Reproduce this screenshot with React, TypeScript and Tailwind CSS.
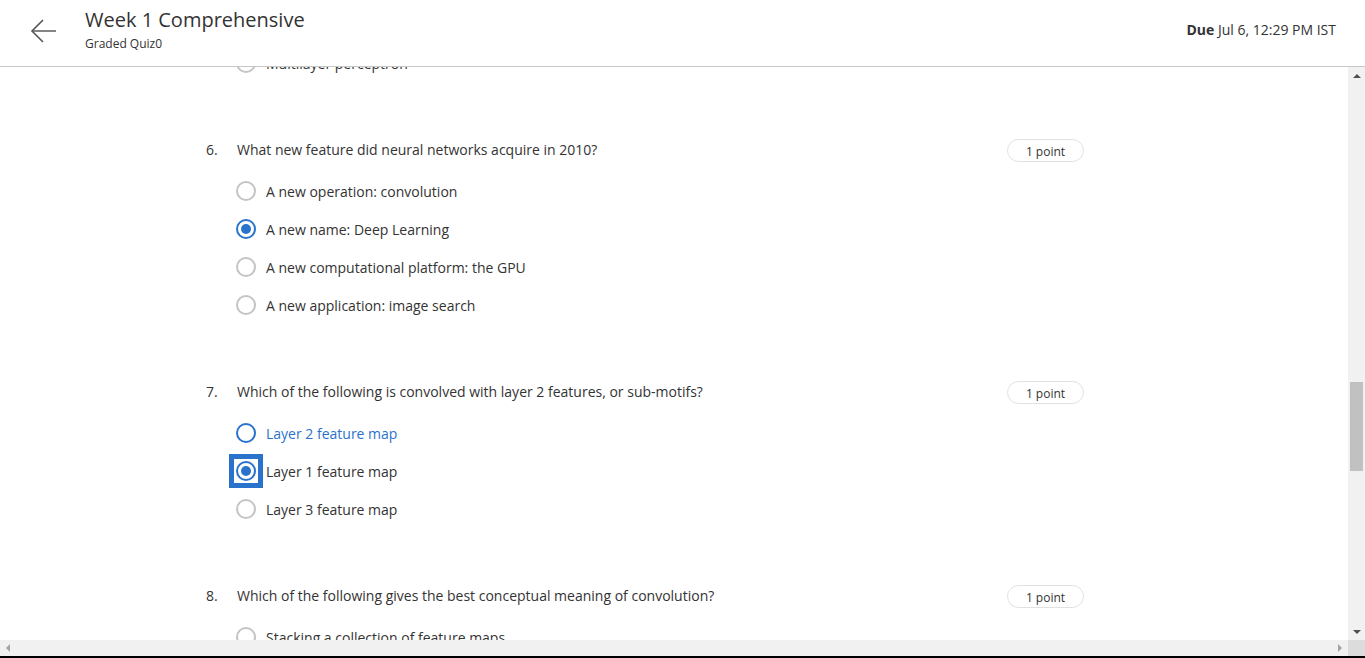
import React from "react";

type Option = { label: string; state?: "checked" | "hover" | "focus" };

interface Question {
  num: number;
  text: string;
  options: Option[];
}

const questions: Question[] = [
  {
    num: 6,
    text: "What new feature did neural networks acquire in 2010?",
    options: [
      { label: "A new operation: convolution" },
      { label: "A new name: Deep Learning", state: "checked" },
      { label: "A new computational platform: the GPU" },
      { label: "A new application: image search" },
    ],
  },
  {
    num: 7,
    text: "Which of the following is convolved with layer 2 features, or sub-motifs?",
    options: [
      { label: "Layer 2 feature map", state: "hover" },
      { label: "Layer 1 feature map", state: "focus" },
      { label: "Layer 3 feature map" },
    ],
  },
  {
    num: 8,
    text: "Which of the following gives the best conceptual meaning of convolution?",
    options: [{ label: "Stacking a collection of feature maps" }],
  },
];

function Radio({ state }: { state?: Option["state"] }) {
  const checked = state === "checked" || state === "focus";
  const blue = state !== undefined;
  const circle = (
    <span
      className={`flex h-5 w-5 items-center justify-center rounded-full border-2 bg-white ${
        blue ? "border-[#2a73cc]" : "border-[#c4c4c4]"
      }`}
    >
      {checked && <span className="h-[10px] w-[10px] rounded-full bg-[#2a73cc]" />}
    </span>
  );
  if (state === "focus") {
    return (
      <span className="-m-[7px] flex h-[34px] w-[34px] items-center justify-center border-[5px] border-[#2a73cc] bg-white">
        {circle}
      </span>
    );
  }
  return circle;
}

function OptionRow({ option }: { option: Option }) {
  return (
    <div className="flex h-[38px] items-center gap-[10px]">
      <Radio state={option.state} />
      <span
        className={`text-[14px] ${
          option.state === "hover" ? "text-[#2a73cc]" : "text-[#333]"
        }`}
      >
        {option.label}
      </span>
    </div>
  );
}

function QuestionBlock({ q }: { q: Question }) {
  return (
    <div className="mt-[55px]">
      <div className="flex h-6 items-start">
        <span className="mt-[1px] w-[31px] text-[14px] leading-6 text-[#333]">{q.num}.</span>
        <span className="mt-[1px] flex-1 text-[14px] leading-6 text-[#333]">{q.text}</span>
        <span className="mt-[2px] flex h-[23px] w-[77px] items-center justify-center rounded-full border border-[#e1e1e1] pt-[3px] text-[12px] leading-4 text-[#333]">
          1 point
        </span>
      </div>
      <div className="mt-[11px] pl-[30px]">
        {q.options.map((o) => (
          <OptionRow key={o.label} option={o} />
        ))}
      </div>
    </div>
  );
}

export default function App() {
  return (
    <div
      className="relative h-[658px] w-[1365px] overflow-hidden bg-white"
      style={{ fontFamily: '"Open Sans", "Liberation Sans", sans-serif' }}
    >
      <header className="flex h-[67px] items-start border-b border-[#c8c8c8] bg-white">
        <div className="flex h-[62px] w-[85px] items-center pl-[29px]">
          <svg width="28" height="26" viewBox="0 0 28 26" fill="none">
            <path d="M3 13 H27" stroke="#666" strokeWidth="1.6" />
            <path d="M14 2 L3 13 L14 24" stroke="#555" strokeWidth="1.6" />
          </svg>
        </div>
        <div className="flex flex-col pt-[7px]">
          <span className="text-[20px] leading-[26px] text-[#333]">Week 1 Comprehensive</span>
          <span className="mt-[3px] text-[12px] leading-[16px] text-[#333]">Graded Quiz0</span>
        </div>
        <div className="ml-auto pr-[29px] pt-[20px] text-[14px] leading-5 text-[#333]">
          <span className="font-bold">Due</span> Jul 6, 12:29 PM IST
        </div>
      </header>

      <div className="flex h-[573px]">
        <div className="relative w-[1348px] overflow-hidden">
          <div className="-mt-[23px] ml-[206px] w-[878px]">
            <div className="pl-[30px]">
              <OptionRow option={{ label: "Multilayer perceptron" }} />
            </div>
            {questions.map((q) => (
              <QuestionBlock key={q.num} q={q} />
            ))}
          </div>
        </div>
        <div className="flex w-[17px] flex-col items-center bg-[#f1f1f1]">
          <div className="flex h-[17px] w-full items-center justify-center">
            <span className="h-0 w-0 border-x-[4px] border-b-[4px] border-x-transparent border-b-[#505050]" />
          </div>
          <div className="mt-[298px] h-[89px] w-[13px] bg-[#c1c1c1]" />
          <div className="mt-auto flex h-[17px] w-full items-center justify-center">
            <span className="h-0 w-0 border-x-[4px] border-t-[4px] border-x-transparent border-t-[#505050]" />
          </div>
        </div>
      </div>

      <div className="flex h-[16px]">
        <div className="flex w-[1348px] items-center justify-between bg-[#f1f1f1] px-[6px]">
          <span className="h-0 w-0 border-y-[4px] border-r-[4px] border-y-transparent border-r-[#a3a3a3]" />
          <span className="h-0 w-0 border-y-[4px] border-l-[4px] border-y-transparent border-l-[#a3a3a3]" />
        </div>
        <div className="w-[17px] bg-[#dcdcdc]" />
      </div>
      <div className="h-[2px] bg-black" />
    </div>
  );
}
